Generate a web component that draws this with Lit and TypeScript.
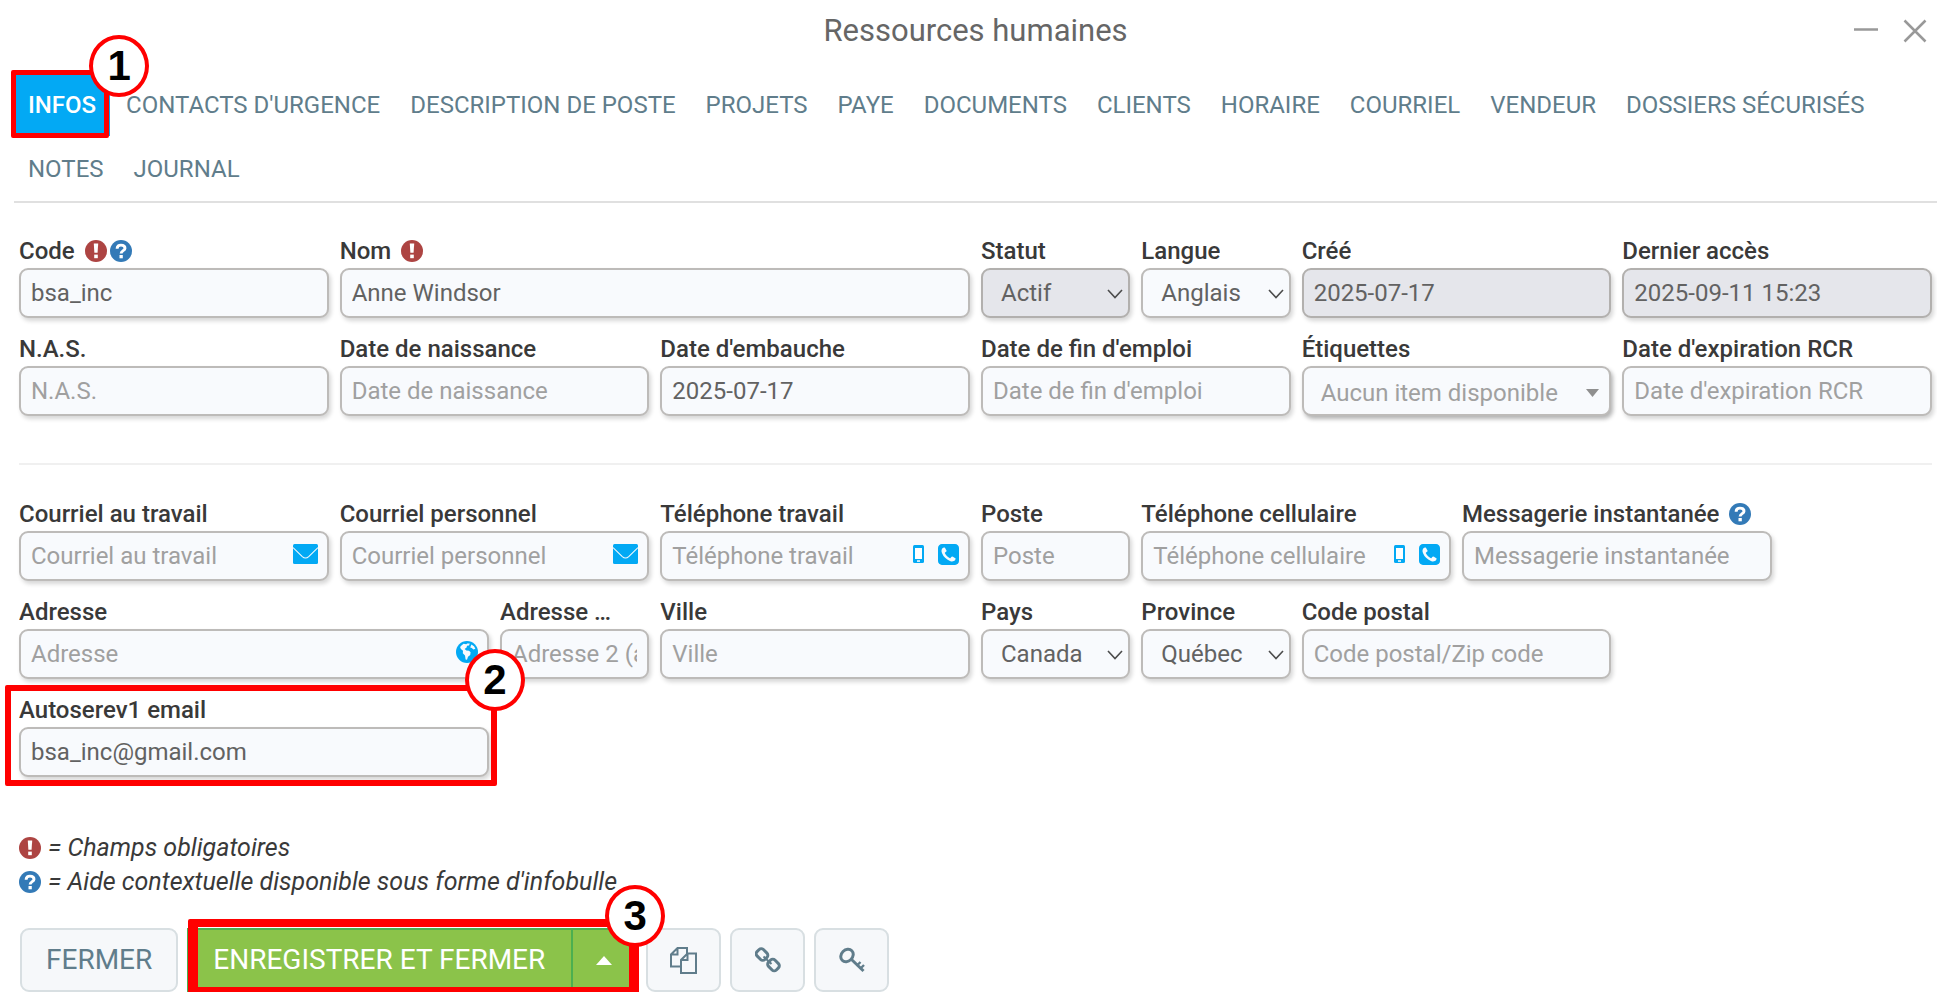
import { LitElement, html, css, svg, nothing, TemplateResult } from "lit";
import { customElement } from "lit/decorators.js";
import { classMap } from "lit/directives/class-map.js";

type Adornment = "mail" | "phone" | "globe";

interface Field {
  id: string;
  label: string;
  span: number;
  kind?: "input" | "select" | "picker";
  value?: string;
  placeholder?: string;
  disabled?: boolean;
  required?: boolean;
  help?: boolean;
  adornment?: Adornment;
  step?: string;
}

const TABS = [
  "Infos", "Contacts d'urgence", "Description de poste", "Projets", "Paye", "Documents",
  "Clients", "Horaire", "Courriel", "Vendeur", "Dossiers sécurisés", "Notes", "Journal",
];

const IDENTITY: Field[][] = [
  [
    { id: "code", label: "Code", span: 2, value: "bsa_inc", required: true, help: true },
    { id: "nom", label: "Nom", span: 4, value: "Anne Windsor", required: true },
    { id: "statut", label: "Statut", span: 1, kind: "select", value: "Actif", disabled: true },
    { id: "langue", label: "Langue", span: 1, kind: "select", value: "Anglais" },
    { id: "cree", label: "Créé", span: 2, value: "2025-07-17", disabled: true },
    { id: "acces", label: "Dernier accès", span: 2, value: "2025-09-11 15:23", disabled: true },
  ],
  [
    { id: "nas", label: "N.A.S.", span: 2, placeholder: "N.A.S." },
    { id: "naissance", label: "Date de naissance", span: 2, placeholder: "Date de naissance" },
    { id: "embauche", label: "Date d'embauche", span: 2, value: "2025-07-17" },
    { id: "fin", label: "Date de fin d'emploi", span: 2, placeholder: "Date de fin d'emploi" },
    { id: "etiquettes", label: "Étiquettes", span: 2, kind: "picker", value: "Aucun item disponible" },
    { id: "rcr", label: "Date d'expiration RCR", span: 2, placeholder: "Date d'expiration RCR" },
  ],
];

const CONTACT: Field[][] = [
  [
    { id: "courriel-travail", label: "Courriel au travail", span: 2, placeholder: "Courriel au travail", adornment: "mail" },
    { id: "courriel-perso", label: "Courriel personnel", span: 2, placeholder: "Courriel personnel", adornment: "mail" },
    { id: "tel-travail", label: "Téléphone travail", span: 2, placeholder: "Téléphone travail", adornment: "phone" },
    { id: "poste", label: "Poste", span: 1, placeholder: "Poste" },
    { id: "tel-cell", label: "Téléphone cellulaire", span: 2, placeholder: "Téléphone cellulaire", adornment: "phone" },
    { id: "messagerie", label: "Messagerie instantanée", span: 2, placeholder: "Messagerie instantanée", help: true },
  ],
  [
    { id: "adresse", label: "Adresse", span: 3, placeholder: "Adresse", adornment: "globe" },
    { id: "adresse2", label: "Adresse …", span: 1, placeholder: "Adresse 2 (app.)" },
    { id: "ville", label: "Ville", span: 2, placeholder: "Ville" },
    { id: "pays", label: "Pays", span: 1, kind: "select", value: "Canada" },
    { id: "province", label: "Province", span: 1, kind: "select", value: "Québec" },
    { id: "postal", label: "Code postal", span: 2, placeholder: "Code postal/Zip code" },
  ],
  [{ id: "autoserve", label: "Autoserev1 email", span: 3, value: "bsa_inc@gmail.com", step: "2" }],
];

const requiredIcon = html`<svg class="sign" viewBox="0 0 22 22" role="img" aria-label="Obligatoire">
  <circle cx="11" cy="11" r="11" fill="#ad4442" />
  <path d="M8.800 3.500h4.400l-.6 9.300h-3.200z" fill="#fff" /><rect x="9.200" y="14.600" width="3.600" height="3.600" fill="#fff" />
</svg>`;

const helpIcon = html`<svg class="sign" viewBox="0 0 22 22" role="img" aria-label="Aide">
  <circle cx="11" cy="11" r="11" fill="#337ab7" />
  <path d="M7.100 8.800C7.100 6 8.700 5.100 11 5.100s4 1.100 4 3.100c0 2.500-3.900 2.400-3.900 5.300" fill="none" stroke="#fff" stroke-width="2.900" />
  <rect x="9.500" y="15" width="3.300" height="3.300" fill="#fff" />
</svg>`;

const mailIcon = svg`<svg class="ico" width="25" height="20" viewBox="0 0 25 20" aria-hidden="true">
  <path d="M0 1.500Q0 0 1.500 0h22Q25 0 25 1.500v17q0 1.500-1.500 1.500h-22Q0 20 0 18.500z" fill="#03a9f4" />
  <path d="M0 3.600l9.300 9q3.200 2.900 6.400 0L25 3.600" fill="none" stroke="#f8fafd" stroke-width="1.100" />
</svg>`;

const mobileIcon = svg`<svg class="ico mobile" width="11" height="18" viewBox="0 0 11 18" aria-hidden="true">
  <rect width="11" height="18" rx="1.500" fill="#03a9f4" />
  <rect x="2" y="3" width="7" height="11" fill="#fff" /><rect x="4" y="15.300" width="3" height="1.500" fill="#fff" />
</svg>`;

const phoneIcon = svg`<svg class="ico" width="21" height="21" viewBox="128 128 1536 1536" aria-hidden="true">
  <path fill="#03a9f4" d="M1408 1193q0-11-2-16t-18-16.500-40.500-25-47.500-26.500-45.500-25-28.500-15q-5-3-19-13t-25-15-21-5q-15 0-36.500 20.500t-39.500 45-38.500 45-33.500 20.500q-7 0-16.500-3.500t-15.500-6.500-17-9.500-14-8.500q-99-55-170-126.500t-127-170.500q-2-3-8.500-14t-9.500-17-6.500-15.500-3.500-16.500q0-13 20.500-33.500t45-38.500 45-39.500 20.500-36.500q0-10-5-21t-15-25-13-19q-3-6-15-28.500t-25-45.500-26.500-47.500-25-40.500-16.500-18-16-2q-48 0-101 22-46 21-80 94.500t-34 130.500q0 16 2.500 34t5 30.500 9 33 10 29.500 12.500 33 11 30q60 164 216.500 320.500t320.500 216.500q6 2 30 11t33 12.500 29.500 10 33 9 30.500 5 34 2.500q57 0 130.500-34t94.500-80q22-53 22-101zm256-777v960q0 119-84.500 203.500t-203.500 84.500h-960q-119 0-203.500-84.500t-84.500-203.500v-960q0-119 84.500-203.500t203.500-84.500h960q119 0 203.500 84.500t84.500 203.500z" />
</svg>`;

const globeIcon = svg`<svg class="ico" width="22" height="22" viewBox="0 0 22 22" aria-hidden="true">
  <circle cx="11" cy="11" r="11" fill="#03a9f4" />
  <path d="M4.600 5.200l3-2.400 2.600.4 1-.8 2.600.2-.8 1.800-2 .4-.4 1.800-2 1.400 1.800 1.600 2.600.2 1.600 1.400-.4 2.800-2.200 1.800-1 3-1.400-.4-.6-3.800-2.200-2.400.2-2.400-1.800-1.600-1-1.400z" fill="#f8fafd" />
  <path d="M15.400 3.400l2.600 1.800 1.400 2.600-2 .6-1.600-1.400-1.600-.4z" fill="#f8fafd" />
</svg>`;

const ADORNMENTS: Record<Adornment, TemplateResult> = {
  mail: html`<button class="link" aria-label="Envoyer un courriel">${mailIcon}</button>`,
  phone: html`<button class="link" aria-label="Texto">${mobileIcon}</button><button class="link" aria-label="Appeler">${phoneIcon}</button>`,
  globe: html`<button class="link" aria-label="Voir la carte">${globeIcon}</button>`,
};

@customElement("hr-field")
class HrField extends LitElement {
  static properties = { field: { attribute: false } };
  declare field: Field;

  static styles = css`
    :host { display: block; min-width: 0; color: #393939; font: 24px/32px Roboto, sans-serif; }
    * { box-sizing: border-box; }
    .label { display: flex; align-items: center; height: 34px; font-weight: 500; }
    .label label { overflow: hidden; text-overflow: ellipsis; white-space: nowrap; }
    .sign { width: 22px; height: 22px; flex: none; margin-right: 3px; }
    .label label + .sign { margin-left: 10px; }
    .control {
      display: flex; align-items: center; position: relative; height: 50px;
      border: 2px solid #bdbbb9; border-radius: 9px; background: #f8fafd;
      box-shadow: 2px 3px 4px rgba(0, 0, 0, 0.16);
    }
    .control.disabled { background: #e5e6eb; border-color: #b2b0ae; }
    .control.picker { box-shadow: 2px 3px 4px rgba(0, 0, 0, 0.3); }
    input, select, .pick {
      flex: 1; min-width: 0; width: 100%; height: 100%; margin: 0; border: 0; outline: 0; background: none;
      color: #626262; font: inherit; padding: 0 10px; opacity: 1;
    }
    input::placeholder { color: #a0a0a0; opacity: 1; }
    select { appearance: none; padding: 0 0 0 18px; }
    .pick { display: flex; align-items: center; justify-content: space-between; padding: 4px 10px 0 17px; color: #a0a0a0; text-align: left; }
    .chevron { position: absolute; right: 5px; top: 19px; pointer-events: none; }
    .link { display: flex; border: 0; background: none; padding: 0; margin: 0 9px 4px 0; }
    .link + .link { margin-left: 5px; }
    .ico { display: block; }
  `;

  private control(f: Field) {
    if (f.kind === "select") {
      return html`<select id=${f.id} ?disabled=${f.disabled}><option>${f.value}</option></select>
        <svg class="chevron" width="16" height="10" viewBox="0 0 16 10" aria-hidden="true">
          <path d="M1 1l7 7.500L15 1" fill="none" stroke="#4c4c4c" stroke-width="1.600" />
        </svg>`;
    }
    if (f.kind === "picker") {
      return html`<button class="pick" id=${f.id}>
        ${f.value}<svg width="13" height="8" viewBox="0 0 13 8" aria-hidden="true"><path d="M0 0h13L6.500 8z" fill="#8f8f8f" /></svg>
      </button>`;
    }
    return html`<input id=${f.id} .value=${f.value ?? ""} placeholder=${f.placeholder ?? ""} ?disabled=${f.disabled} />
      ${f.adornment ? ADORNMENTS[f.adornment] : nothing}`;
  }

  render() {
    const f = this.field;
    return html`
      <div class="label">
        <label for=${f.id}>${f.label}</label>${f.required ? requiredIcon : nothing}${f.help ? helpIcon : nothing}
      </div>
      <div class=${classMap({ control: true, disabled: !!f.disabled, picker: f.kind === "picker" })}>${this.control(f)}</div>
    `;
  }
}

@customElement("app-root")
class AppRoot extends LitElement {
  static styles = css`
    :host { display: block; background: #fff; color: #393939; font: 24px/34px Roboto, sans-serif; }
    * { box-sizing: border-box; }
    button { font: inherit; margin: 0; }
    header { display: grid; grid-template-columns: 1fr auto 1fr; align-items: center; height: 62px; padding: 0 10px 0 24px; }
    h1 { margin: 0; grid-column: 2; font-size: 31px; font-weight: 400; color: #666; }
    .window { display: flex; justify-content: flex-end; gap: 24px; }
    .window button { display: flex; border: 0; background: none; padding: 0; }
    nav { margin-left: 14px; padding: 10px 0 0; border-bottom: 2px solid #e0e0e0; }
    .tabs { display: flex; flex-wrap: wrap; column-gap: 2px; list-style: none; margin: 0; padding: 0 0 1px; }
    .tabs li { position: relative; }
    .tabs a {
      display: block; height: 64px; padding: 17px 14px 15px; line-height: 32px;
      color: #607d8b; text-transform: uppercase; text-decoration: none;
    }
    .tabs .active { background: #03a9f4; color: #fff; font-weight: 500; }
    .frame { position: absolute; border: 5px solid #f00; border-radius: 2px; pointer-events: none; z-index: 1; }
    .badge {
      position: absolute; z-index: 2; display: flex; align-items: center; justify-content: center;
      width: 60px; height: 62px; border: 4px solid #f00; border-radius: 50%; background: #fff;
      color: #000; font: bold 42px/1 "Liberation Sans", sans-serif;
    }
    .tabs .frame { inset: -2px 1px -2px -3px; }
    .tabs .badge { top: -37px; right: -39px; }
    form { padding: 31px 5px 0 19px; }
    .group { display: grid; gap: 14px; padding-bottom: 47px; }
    .group + .group { border-top: 2px solid #f0f0f0; padding: 32px 0 54px; }
    .row { display: grid; grid-template-columns: repeat(12, minmax(0, 1fr)); gap: 11px; position: relative; }
    .s1 { grid-column: span 1; }
    .s2 { grid-column: span 2; }
    .s3 { grid-column: span 3; }
    .s4 { grid-column: span 4; }
    .marked { position: relative; }
    .marked .frame { inset: -8px -8px -9px -14px; border-width: 6px; }
    .marked .badge { top: -44px; right: -36px; }
    .legend { font-size: 25px; font-style: italic; display: grid; }
    .legend p { margin: 0; display: flex; align-items: center; gap: 7px; }
    .sign { width: 22px; height: 22px; }
    .actions { display: flex; align-items: center; gap: 9px; margin-top: 29px; padding-left: 1px; }
    .btn {
      display: flex; align-items: center; justify-content: center; height: 64px;
      border: 2px solid #d8dfe2; border-radius: 9px; background: #f6f8fa; color: #607d8b; padding: 0 24px; font-size: 28px;
    }
    .btn.icon { width: 75px; padding: 0; }
    .save { position: relative; display: flex; }
    .save button { height: 64px; border: 2px solid #4caf50; background: #8bc34a; color: #fff; font-size: 28px; padding: 0 26px 0 24px; }
    .save .more { border-left-width: 0; padding: 0 23px; display: flex; align-items: center; }
    .save .frame { inset: -9px -2px -3px 1px; border-width: 8px 10px; }
    .save .badge { top: -43px; right: -28px; }
  `;

  private cell(f: Field) {
    return f.step
      ? html`<div class="marked s${f.span}"><hr-field .field=${f}></hr-field><span class="frame"></span><span class="badge">${f.step}</span></div>`
      : html`<hr-field class="s${f.span}" .field=${f}></hr-field>`;
  }

  private group(rows: Field[][]) {
    return html`<section class="group">${rows.map((r) => html`<div class="row">${r.map((f) => this.cell(f))}</div>`)}</section>`;
  }

  render() {
    return html`
      <header>
        <h1>Ressources humaines</h1>
        <div class="window">
          <button aria-label="Réduire"><svg width="26" height="24" viewBox="0 0 26 24"><path d="M1 10.500h24" stroke="#999" stroke-width="2.500" /></svg></button>
          <button aria-label="Fermer la fenêtre"><svg width="24" height="24" viewBox="0 0 24 24"><path d="M1.500 1.500l21 21M22.500 1.500l-21 21" stroke="#999" stroke-width="2.500" /></svg></button>
        </div>
      </header>
      <nav>
        <ul class="tabs">
          ${TABS.map((t, i) => html`<li>
            <a href="#" class=${classMap({ active: i === 0 })}>${t}</a>
            ${i === 0 ? html`<span class="frame"></span><span class="badge">1</span>` : nothing}
          </li>`)}
        </ul>
      </nav>
      <form>
        ${this.group(IDENTITY)}
        ${this.group(CONTACT)}
        <div class="legend">
          <p>${requiredIcon}<span>= Champs obligatoires</span></p>
          <p>${helpIcon}<span>= Aide contextuelle disponible sous forme d'infobulle</span></p>
        </div>
        <div class="actions">
          <button type="button" class="btn">FERMER</button>
          <div class="save">
            <button type="button">ENREGISTRER ET FERMER</button>
            <button type="button" class="more" aria-label="Plus d'options"><svg width="16" height="9" viewBox="0 0 16 9"><path d="M0 9h16L8 0z" fill="#fff" /></svg></button>
            <span class="frame"></span><span class="badge">3</span>
          </div>
          <button type="button" class="btn icon" aria-label="Dupliquer">
            <svg width="27" height="27" viewBox="0 0 27 27" fill="none" stroke="#607d8b" stroke-width="2">
              <path d="M10 19.500H1V7.500L7.500 1H17v6M7.500 1v6.500H1" /><path d="M17.500 6.500H26V26H11V13zM17.500 6.500V13H11" fill="#f6f8fa" />
            </svg>
          </button>
          <button type="button" class="btn icon" aria-label="Lien">
            <svg width="26" height="26" viewBox="0 0 26 26" fill="none" stroke="#607d8b" stroke-width="3">
              <rect x="1.500" y="3" width="11" height="9" rx="3" transform="rotate(45 7 7.500)" />
              <rect x="13" y="13.500" width="11" height="9" rx="3" transform="rotate(45 18.500 18)" />
              <path d="M8.500 9.500l8 7.500" stroke-width="2" />
            </svg>
          </button>
          <button type="button" class="btn icon" aria-label="Clé">
            <svg width="26" height="26" viewBox="0 0 26 26" fill="none" stroke="#607d8b" stroke-width="3">
              <ellipse cx="8" cy="8.500" rx="6.800" ry="5.600" transform="rotate(-45 8 8.500)" />
              <path d="M12 12l12.500 12" /><path d="M18 18.500l3.500-3.500M21.500 21.500l3.500-3.500" stroke-width="2.400" />
            </svg>
          </button>
        </div>
      </form>
    `;
  }
}
